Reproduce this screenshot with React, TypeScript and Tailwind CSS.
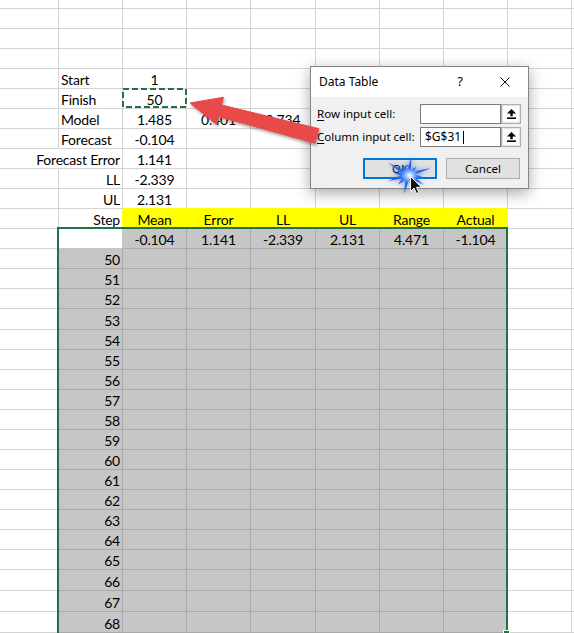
import React from 'react';

const SHEET = 'Lato, "Liberation Sans", sans-serif';
const DLG = '"Noto Sans", "Open Sans", sans-serif';

// A..J, widths in px (A is cut off at the left edge)
const COLS = ['w-[59px]', 'w-[64px]', 'w-[64px]', 'w-[64px]', 'w-[65px]', 'w-[64px]', 'w-[64px]', 'w-[64px]', 'w-[64px]', 'flex-1'];

const R_GRID = 'border-r-[#d4d4d4]';
const B_GRID = 'border-b-[#d4d4d4]';
const R_DARK = 'border-r-[#a9a9a9]';
const B_DARK = 'border-b-[#a9a9a9]';
const R_YEL = 'border-r-[#ffff00]';
const B_YEL = 'border-b-[#ffff00]';
const R_FILL = 'border-r-[#c6c6c6]';
const B_FILL = 'border-b-[#c6c6c6]';
const R_WHITE = 'border-r-white';

const GRAY = 'bg-[#c6c6c6]';
const YELLOW = 'bg-[#ffff00]';

type Spec = { text?: string; align?: 'left' | 'center' | 'right'; bg?: string; r?: string; b?: string };

function Row({ h = 'h-[20px]', cells = {} }: { h?: string; cells?: Record<number, Spec> }) {
  return (
    <div className={`flex shrink-0 ${h}`}>
      {COLS.map((w, i) => {
        const c = cells[i] ?? {};
        const align = c.align === 'left' ? 'justify-start' : c.align === 'right' ? 'justify-end' : 'justify-center';
        return (
          <div
            key={i}
            className={`${w} shrink-0 flex items-end border-r border-b px-[2px] whitespace-nowrap ${align} ${c.bg ?? 'bg-white'} ${c.r ?? R_GRID} ${c.b ?? B_GRID}`}
          >
            {c.text && <span className="leading-[16px] tracking-[-0.2px]">{c.text}</span>}
          </div>
        );
      })}
    </div>
  );
}

const HEADERS = ['Mean', 'Error', 'LL', 'UL', 'Range', 'Actual'];
const MEANS = ['-0.104', '1.141', '-2.339', '2.131', '4.471', '-1.104'];
const TALL = [53, 66, 67, 68];

function stepRow(): Record<number, Spec> {
  const cells: Record<number, Spec> = { 1: { text: 'Step', align: 'right', r: R_YEL } };
  HEADERS.forEach((t, i) => (cells[i + 2] = { text: t, bg: YELLOW, r: R_YEL, b: B_YEL }));
  return cells;
}

function ulRow(): Record<number, Spec> {
  const cells: Record<number, Spec> = { 1: { text: 'UL', align: 'right' } };
  for (let i = 2; i < 8; i++) cells[i] = { b: B_YEL };
  cells[2] = { text: '2.131', b: B_YEL };
  return cells;
}

function meanRow(): Record<number, Spec> {
  const cells: Record<number, Spec> = { 1: { r: R_FILL, b: B_FILL } };
  MEANS.forEach((t, i) => (cells[i + 2] = { text: t, bg: GRAY, r: R_DARK, b: B_DARK }));
  return cells;
}

function stepCells(n: number): Record<number, Spec> {
  const cells: Record<number, Spec> = { 1: { text: String(n), align: 'right', bg: GRAY, r: R_DARK, b: B_DARK } };
  for (let i = 2; i < 8; i++) cells[i] = { bg: GRAY, r: R_DARK, b: B_DARK };
  return cells;
}

function RefIcon() {
  return (
    <svg width="9" height="10" viewBox="0 0 9 10">
      <polygon points="4.5,0 0,4.5 9,4.5" fill="#000" />
      <rect x="3.3" y="4" width="2.4" height="3.2" fill="#000" />
      <rect x="0" y="8.4" width="9" height="1.6" fill="#000" />
    </svg>
  );
}

function RefButton() {
  return (
    <div className="w-[20px] h-[20px] border border-[#adadad] bg-[#e5e5e5] p-[1px]">
      <div className="w-full h-full bg-[#fbfbfb] flex items-center justify-center">
        <RefIcon />
      </div>
    </div>
  );
}

function DataTableDialog() {
  return (
    <div
      className="absolute left-[310px] top-[66px] w-[219px] h-[123px] bg-[#f0f0f0] border border-[#858585] shadow-[0_4px_14px_rgba(0,0,0,0.35)] flex flex-col text-black text-[11.5px]"
      style={{ fontFamily: DLG }}
    >
      <div className="h-[30px] bg-white flex items-center">
        <span className="pl-[8px] text-[12px]">Data Table</span>
        <span className="ml-auto w-[8px] text-center text-[13px]">?</span>
        <svg className="ml-[36px] mr-[18px]" width="10" height="10" viewBox="0 0 10 10">
          <path d="M0.5 0.5 L9.5 9.5 M9.5 0.5 L0.5 9.5" stroke="#111" strokeWidth="1" />
        </svg>
      </div>
      <div className="flex flex-col pt-[7px] pl-[6px]">
        <div className="flex items-center h-[20px]">
          <span className="w-[103px]">
            <span className="underline underline-offset-2">R</span>ow input cell:
          </span>
          <div className="w-[81px] h-[20px] bg-white border border-[#7a7a7a]" />
          <RefButton />
        </div>
        <div className="flex items-center h-[20px] mt-[3px]">
          <span className="w-[103px]">
            <span className="underline underline-offset-2">C</span>olumn input cell:
          </span>
          <div className="w-[81px] h-[20px] bg-white border border-[#7a7a7a] flex items-center pl-[4px] text-[12px]">
            <span>$G$31</span>
            <span className="ml-[2px] w-px h-[13px] bg-black" />
          </div>
          <RefButton />
        </div>
        <div className="flex h-[21px] mt-[11px] pl-[46px] gap-[9px]">
          <div className="w-[74px] h-[21px] border-2 border-[#0078d7] bg-[#e1e1e1] flex items-center justify-center">OK</div>
          <div className="w-[74px] h-[21px] border border-[#adadad] bg-[#e1e1e1] flex items-center justify-center">Cancel</div>
        </div>
      </div>
    </div>
  );
}

function starPoints(cx: number, cy: number, inner: number, scale: number) {
  const outer = [20, 12, 22, 13, 18, 11, 21, 14, 19, 12, 22, 13];
  const pts: string[] = [];
  const n = outer.length;
  for (let i = 0; i < n * 2; i++) {
    const a = (Math.PI * i) / n - Math.PI / 2 + 0.15;
    const r = (i % 2 === 0 ? outer[i / 2] : inner) * scale;
    pts.push(`${(cx + Math.cos(a) * r).toFixed(1)},${(cy + Math.sin(a) * r * 0.78).toFixed(1)}`);
  }
  return pts.join(' ');
}

function Overlays() {
  return (
    <svg className="absolute left-0 top-0 pointer-events-none" width="574" height="633">
      <defs>
        <filter id="shadow" x="-20%" y="-20%" width="140%" height="160%">
          <feDropShadow dx="1" dy="2" stdDeviation="1.5" floodColor="#000" floodOpacity="0.35" />
        </filter>
        <filter id="glow" x="-50%" y="-50%" width="200%" height="200%">
          <feGaussianBlur stdDeviation="0.5" />
        </filter>
        <filter id="halo" x="-50%" y="-50%" width="200%" height="200%">
          <feGaussianBlur stdDeviation="2.5" />
        </filter>
        <radialGradient id="burst" cx="50%" cy="50%" r="50%">
          <stop offset="0%" stopColor="#ffffff" />
          <stop offset="16%" stopColor="#a9c8ff" />
          <stop offset="42%" stopColor="#2d6ff3" />
          <stop offset="100%" stopColor="#1b4fd0" />
        </radialGradient>
      </defs>
      {/* marching ants round the copied cell */}
      <rect x="123" y="89" width="63" height="18" fill="none" stroke="#217346" strokeWidth="2" strokeDasharray="6 3" />
      {/* red callout arrow */}
      <polygon
        points="190,103 223.5,97.2 221.5,105 318.9,128.7 315.1,143.3 218.5,116.6 216.5,124.4"
        fill="#e84a4a"
        stroke="#e84a4a"
        strokeWidth="1"
        strokeLinejoin="round"
        filter="url(#shadow)"
      />
      {/* click burst */}
      <polygon points={starPoints(408, 175, 7.5, 1.2)} fill="#3a6fd8" filter="url(#halo)" opacity="0.6" />
      <polygon points={starPoints(408, 175, 6.5, 1.12)} fill="url(#burst)" filter="url(#glow)" />
      {/* mouse cursor */}
      <path
        d="M0 0 L0 15 L3.5 11.6 L6 17 L8.4 16 L6 10.8 L11 10.8 Z"
        transform="translate(410.5 176.5)"
        fill="#111"
        stroke="#fff"
        strokeWidth="1"
        strokeLinejoin="round"
      />
    </svg>
  );
}

export default function App() {
  const steps = Array.from({ length: 19 }, (_, i) => 50 + i);
  return (
    <div className="relative w-[574px] h-[633px] overflow-hidden bg-white text-black text-[14px]" style={{ fontFamily: SHEET }}>
      <div className="flex flex-col">
        <Row h="h-[9px]" />
        <Row />
        <Row />
        <Row />
        <Row cells={{ 1: { text: 'Start', align: 'left' }, 2: { text: '1' } }} />
        <Row cells={{ 1: { text: 'Finish', align: 'left' }, 2: { text: '50' } }} />
        <Row cells={{ 1: { text: 'Model', align: 'left' }, 2: { text: '1.485' }, 3: { text: '0.401' }, 4: { text: '0.734' } }} />
        <Row cells={{ 1: { text: 'Forecast', align: 'left' }, 2: { text: '-0.104' } }} />
        <Row cells={{ 0: { r: R_WHITE }, 1: { text: 'Forecast Error', align: 'right' }, 2: { text: '1.141' } }} />
        <Row cells={{ 1: { text: 'LL', align: 'right' }, 2: { text: '-2.339' } }} />
        <Row cells={ulRow()} />
        <Row cells={stepRow()} />
        <Row cells={meanRow()} />
        {steps.map((n) => (
          <Row key={n} h={TALL.includes(n) ? 'h-[21px]' : 'h-[20px]'} cells={stepCells(n)} />
        ))}
      </div>

      {/* selected range */}
      <div className="absolute left-[57px] top-[227px] w-[451px] h-[410px] border-2 border-[#217346]" />
      <div className="absolute left-[503px] top-[630px] w-[7px] h-[7px] bg-[#217346] border border-white" />

      <DataTableDialog />
      <Overlays />
    </div>
  );
}
